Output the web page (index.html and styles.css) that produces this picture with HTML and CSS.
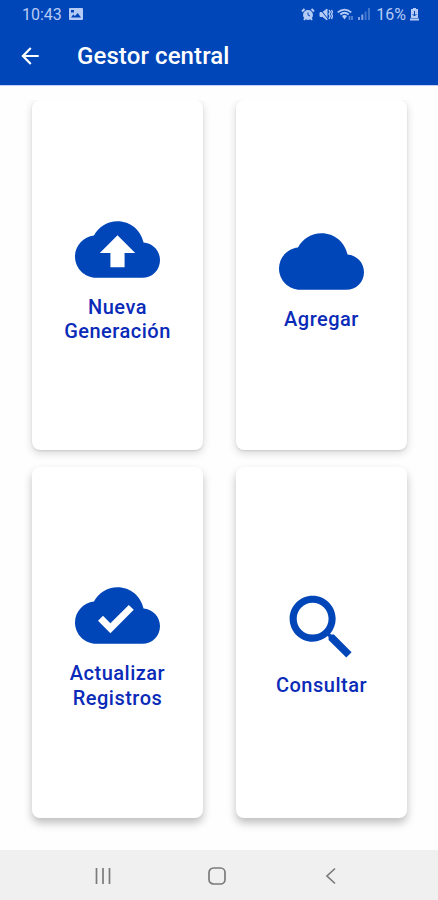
FILE: index.html
```html
<!DOCTYPE html>
<html lang="es">
<head>
    <meta charset="UTF-8" />
    <meta name="viewport" content="width=device-width, initial-scale=1" />
    <title>Gestor central</title>
    <link rel="stylesheet" href="styles.css">
</head>
<body>
    <header class="header">
        <div class="status-bar">
            <span class="clock">10:43</span>
            <svg class="picture" width="14" height="12" viewBox="0 0 14 12"><path fill="currentColor" fill-rule="evenodd" d="M1 0h12q1 0 1 1v10q0 1-1 1H1q-1 0-1-1V1q0-1 1-1zM2 9.500h10L8.700 5 6 8 4.200 6.500zM2 2v2.500h3V2z"/></svg>
            <div class="status-icons">
                <svg width="14" height="13" viewBox="0 0 14 13" fill="none" stroke="currentColor"><circle cx="7" cy="7" r="4.200" fill="currentColor" stroke-width="1.500"/><path stroke-width="2" d="M1 3.500 3.500 1M13 3.500 10.500 1M3 12l1.500-2M11 12 9.500 10"/><path stroke="#0046b8" d="M7 4.500V7l2 1"/></svg>
                <svg width="14" height="13" viewBox="0 0 14 13" fill="none" stroke="currentColor"><path fill="currentColor" d="M1 4.500h2.500L8 1v11L3.500 8.500H1z"/><path stroke="#0046b8" d="M1 1l8 10"/><path stroke-width="1.400" d="M10 2l1.200 2L10 6l1.200 2L10 11M12.500 2l1 2-1 2 1 2-1 3"/></svg>
                <svg class="wifi" width="17" height="13" viewBox="0 0 17 13" fill="none" stroke="currentColor" stroke-width="1.700"><path d="M.7 4.300q6.800-5.500 13.600 0M3.300 6.500q4.200-3.500 8.400 0"/><path fill="currentColor" stroke="none" d="M5 8q2.500-2 5 0l-2.500 3.500z"/><path opacity=".5" d="M12.500 8v4M15 8v4"/></svg>
                <svg class="signal" width="12" height="12" viewBox="0 0 12 12" fill="currentColor"><path d="M0 9h2v3H0zM3.300 6.500h2V12h-2z"/><path opacity=".5" d="M6.600 3.500h2V12h-2zM9.900 0H12v12H9.900z"/></svg>
                <span class="battery-level">16%</span>
                <svg width="9" height="13" viewBox="0 0 9 13"><path fill="currentColor" d="M3 0h3v1h2v9H1V1h2zM0 10.500h9v2H0z"/><path stroke="#0046b8" fill="none" d="M4.500 3v5M2.500 6l2 2 2-2"/></svg>
            </div>
        </div>
        <div class="toolbar">
            <svg class="back" viewBox="0 0 24 24"><path fill="currentColor" d="M20 11H7.830l5.590-5.590L12 4l-8 8 8 8 1.410-1.410L7.830 13H20v-2z"/></svg>
            <h1>Gestor central</h1>
        </div>
    </header>

    <main class="grid">
        <a class="card">
            <svg class="icon" viewBox="0 0 24 24"><path d="M19.350 10.040C18.670 6.590 15.640 4 12 4 9.110 4 6.600 5.640 5.350 8.040 2.340 8.360 0 10.910 0 14c0 3.310 2.690 6 6 6h13c2.760 0 5-2.240 5-5 0-2.640-2.050-4.780-4.650-4.960zM14 13v4h-4v-4H7l5-5 5 5h-3z"/></svg>
            <span>Nueva<br />Generación</span>
        </a>
        <a class="card">
            <svg class="icon" viewBox="0 0 24 24"><path d="M19.350 10.040C18.670 6.590 15.640 4 12 4 9.110 4 6.600 5.640 5.350 8.040 2.340 8.360 0 10.910 0 14c0 3.310 2.690 6 6 6h13c2.760 0 5-2.240 5-5 0-2.640-2.050-4.780-4.650-4.960z"/></svg>
            <span>Agregar</span>
        </a>
        <a class="card last-row">
            <svg class="icon" viewBox="0 0 24 24"><path d="M19.350 10.040C18.670 6.590 15.640 4 12 4 9.110 4 6.600 5.640 5.350 8.040 2.340 8.360 0 10.910 0 14c0 3.310 2.690 6 6 6h13c2.760 0 5-2.240 5-5 0-2.640-2.050-4.780-4.650-4.960zM10 17l-3.500-3.500 1.410-1.410L10 14.170 15.180 9l1.410 1.410L10 17z"/></svg>
            <span>Actualizar<br />Registros</span>
        </a>
        <a class="card last-row">
            <svg class="icon" viewBox="0 0 24 24"><path d="M15.500 14h-.79l-.28-.27C15.410 12.590 16 11.110 16 9.500 16 5.910 13.090 3 9.500 3S3 5.910 3 9.500 5.910 16 9.500 16c1.610 0 3.090-.59 4.230-1.570l.27.28v.79l5 4.990L20.490 19l-4.990-5zm-6 0C7.010 14 5 11.990 5 9.500S7.010 5 9.500 5 14 7.010 14 9.500 11.990 14 9.500 14z"/></svg>
            <span>Consultar</span>
        </a>
    </main>

    <nav class="nav-bar">
        <svg width="18" height="18" viewBox="0 0 18 18"><path d="M2.500 1v16M9 1v16M15.500 1v16"/></svg>
        <svg width="18" height="18" viewBox="0 0 18 18"><rect x="1" y="1" width="16" height="16" rx="4.500"/></svg>
        <svg width="18" height="18" viewBox="0 0 18 18"><path d="M13 1.500 5 9l8 7.500"/></svg>
    </nav>
</body>
</html>
```
FILE: styles.css
```css
* {
    box-sizing: border-box;
}
body {
    margin: 0;
    height: 900px;
    display: flex;
    flex-direction: column;
    font-family: Roboto, sans-serif;
    background: #fefefe;
}
svg {
    display: block;
    flex: none;
}
.header {
    height: 85px;
    background: #0046b8;
    color: white;
    box-shadow: 0 1px 0 #c6cdf3;
}
.status-bar {
    height: 28px;
    padding: 0 19px 0 22px;
    display: flex;
    align-items: center;
    font-size: 16px;
    color: #b5cbf5;
}
.picture {
    margin-left: 7px;
}
.status-icons {
    margin-left: auto;
    display: flex;
    align-items: center;
    gap: 4px;
}
.signal {
    opacity: 0.7;
}
.battery-level {
    margin-left: 2px;
}
.toolbar {
    height: 56px;
    padding-left: 17px;
    display: flex;
    align-items: center;
}
.back {
    width: 26px;
    height: 26px;
}
h1 {
    margin: 0 0 0 34px;
    font-size: 24px;
    font-weight: 500;
    letter-spacing: 0.1px;
}
.grid {
    flex: 1;
    margin-top: 15px;
    padding: 0 31px 32px 32px;
    display: grid;
    grid-template-columns: 1fr 1fr;
    grid-template-rows: 350px 351px;
    gap: 17px 33px;
    overflow: hidden;
}
.card {
    display: flex;
    flex-direction: column;
    align-items: center;
    justify-content: center;
    gap: 3px;
    background: white;
    border-radius: 8px;
    box-shadow: 0 3px 8px rgba(0,0,0,0.16), 0 1px 2px rgba(0,0,0,0.1);
    color: #0a2bb8;
    font-size: 20px;
    font-weight: 500;
    line-height: 24.5px;
    letter-spacing: 0.5px;
    text-align: center;
}
.last-row {
    padding-bottom: 2px;
    box-shadow: 0 5px 9px rgba(0,0,0,0.25);
}
.icon {
    width: 85px;
    height: 85px;
    fill: #0046b8;
}
.nav-bar {
    height: 50px;
    padding: 2px 98px 0 94px;
    display: flex;
    align-items: center;
    justify-content: space-between;
    background: #f0f0f0;
}
.nav-bar svg {
    fill: none;
    stroke: #7b7b7b;
    stroke-width: 1.7;
}
```
